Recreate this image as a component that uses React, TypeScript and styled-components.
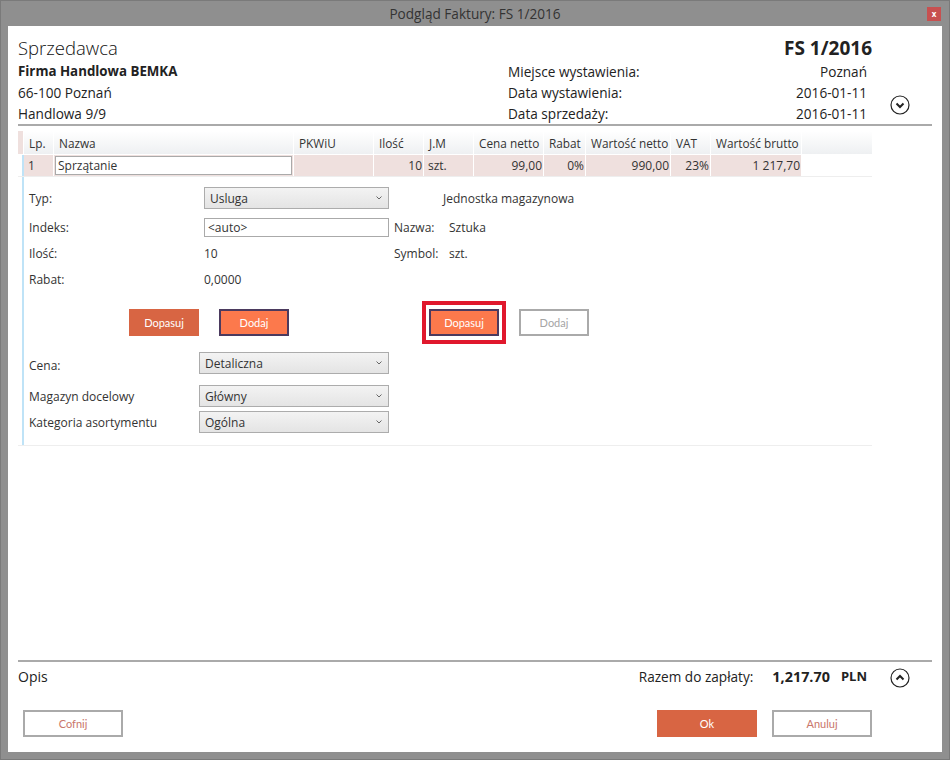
import React from 'react';
import styled, { createGlobalStyle } from 'styled-components';

const GlobalStyle = createGlobalStyle`
  html, body {
    margin: 0;
    padding: 0;
    background: #8f8f8f;
  }
  * {
    box-sizing: border-box;
  }
`;

const FONT = `"Open Sans", "Noto Sans", sans-serif`;
const BUTTON_FONT = `Lato, "Open Sans", sans-serif`;

const Window = styled.div`
  width: 950px;
  height: 760px;
  display: flex;
  flex-direction: column;
  background: #8f8f8f;
  border: 1px solid #7a7a7a;
  padding: 0 7px 7px;
  font-family: ${FONT};
  color: #222;
  overflow: hidden;
`;

const TitleBar = styled.div`
  position: relative;
  flex: none;
  height: 25px;
  display: flex;
  align-items: center;
  justify-content: center;
  font-size: 13.6px;
  color: #333;
`;

const CloseButton = styled.div`
  position: absolute;
  right: 1px;
  top: 6px;
  width: 14px;
  height: 14px;
  background: #c75050;
  color: #fff;
  font-size: 8px;
  font-weight: 700;
  line-height: 13px;
  text-align: center;
`;

const Content = styled.div`
  flex: 1;
  display: flex;
  flex-direction: column;
  background: #fff;
  padding: 0 10px;
  min-height: 0;
`;

const InvoiceHeader = styled.div`
  flex: none;
  height: 100px;
  display: flex;
  border-bottom: 2px solid #aaa;
  padding-top: 10px;
`;

const Seller = styled.div`
  width: 490px;
`;

const SectionTitle = styled.div`
  font-size: 18.5px;
  line-height: 23px;
  margin-bottom: 2px;
  font-weight: 300;
  color: #111;
`;

const InfoLine = styled.div<{ $bold?: boolean }>`
  font-size: ${p => (p.$bold ? '13.3px' : '13.6px')};
  line-height: 21px;
  font-weight: ${p => (p.$bold ? 700 : 400)};
`;

const Dates = styled.div`
  width: 364px;
`;

const InvoiceNumber = styled.div`
  font-size: 19px;
  line-height: 25px;
  font-weight: 700;
  text-align: right;
`;

const DateRow = styled.div`
  display: flex;
  justify-content: space-between;
  padding-right: 5px;
  font-size: 13.6px;
  line-height: 21px;
`;

const CollapseColumn = styled.div`
  flex: 1;
  display: flex;
  justify-content: flex-end;
  align-items: flex-end;
  padding: 0 22px 9px 0;
`;

const RoundIcon = styled.svg<{ $drop?: boolean }>`
  display: block;
  width: 20px;
  height: 20px;
  margin-top: ${p => (p.$drop ? '4px' : '0')};
`;

const TableArea = styled.div`
  flex: none;
  width: 854px;
  margin-top: 5px;
`;

const COLUMNS = '6px 30px 240px 80px 50px 50px 70px 42px 85px 40px 91px 1fr';

const HeaderRow = styled.div`
  display: grid;
  grid-template-columns: ${COLUMNS};
  height: 23px;
  background: linear-gradient(#ffffff, #eef0f2);
`;

const HeaderCell = styled.div`
  display: flex;
  align-items: center;
  padding-left: 5px;
  font-size: 11.8px;
  color: #333;
  white-space: nowrap;
  border-right: 1px solid #fff;
`;

const Marker = styled.div`
  background: #efe0de;
  border-right: 1px solid #fff;
`;

const DataRow = styled.div`
  display: grid;
  grid-template-columns: ${COLUMNS};
  height: 22px;
  margin-top: 1px;
  border-bottom: 1px solid #eee;
`;

const DataCell = styled.div<{ $right?: boolean; $plain?: boolean }>`
  display: flex;
  align-items: center;
  justify-content: ${p => (p.$right ? 'flex-end' : 'flex-start')};
  padding: 0 1px 1px 4px;
  font-size: 12px;
  color: #333;
  background: ${p => (p.$plain ? '#fff' : '#efe0de')};
  border-right: 1px solid #fff;
  white-space: nowrap;
`;

const RowMarker = styled.div`
  background: #fff;
  border-right: 2px solid #bfe3f7;
`;

const NameInput = styled.div`
  width: 238px;
  height: 19px;
  display: flex;
  align-items: center;
  margin-left: -3px;
  padding-left: 2px;
  background: #fff;
  border: 1px solid #aaa;
  font-size: 12px;
`;

const DetailPanel = styled.div`
  height: 269px;
  border-bottom: 1px solid #eee;
`;

const DetailInner = styled.div`
  height: 268px;
  margin-left: 4px;
  padding: 10px 0 0 5px;
  border-left: 2px solid #bfe3f7;
`;

const FormGrid = styled.div`
  display: grid;
  grid-template-columns: 175px 185px 60px 1fr;
  grid-template-rows: 22px 19px 14px 20px;
  row-gap: 9px;
  align-items: center;
  font-size: 12px;
  color: #333;
`;

const GridLabel = styled.div<{ $drop?: boolean }>`
  display: flex;
  align-items: center;
  height: 22px;
  padding-top: ${p => (p.$drop ? '4px' : '0')};
  white-space: nowrap;
`;

const UnitTitle = styled.div`
  grid-column: 3 / 5;
  padding-left: 54px;
  white-space: nowrap;
`;

const UnitLabel = styled.div`
  padding-left: 5px;
  white-space: nowrap;
`;

const SelectBox = styled.div`
  display: flex;
  align-items: center;
  justify-content: space-between;
  height: 22px;
  padding: 0 6px 0 5px;
  background: linear-gradient(#f3f3f3, #e4e4e4);
  border: 1px solid #acacac;
  font-size: 12px;
  color: #333;
`;

const ChevronMark = styled.svg`
  width: 6px;
  height: 4px;
  flex: none;
`;

const TextBox = styled.div`
  display: flex;
  align-items: center;
  height: 19px;
  padding-left: 3px;
  background: #fff;
  border: 1px solid #aaa;
  font-size: 12px;
`;

const ButtonRow = styled.div`
  display: flex;
  align-items: center;
  height: 43px;
  margin-top: 12px;
  padding-left: 100px;
`;

const ActionButton = styled.div<{ $variant: 'solid' | 'focus' | 'ghost'; $wide?: boolean }>`
  width: ${p => (p.$wide ? '100px' : '70px')};
  height: 27px;
  display: flex;
  align-items: center;
  justify-content: center;
  font-family: ${BUTTON_FONT};
  font-size: 11px;
  color: ${p => (p.$variant === 'ghost' ? '#c9766a' : '#fff')};
  background: ${p =>
    p.$variant === 'solid' ? '#d86543' : p.$variant === 'focus' ? '#fc794c' : '#fff'};
  border: 2px solid
    ${p =>
      p.$variant === 'solid' ? '#d86543' : p.$variant === 'focus' ? '#4b3a5e' : '#aaa'};
`;

const MutedButton = styled(ActionButton)`
  color: #a5a5a5;
`;

const AddButton = styled(ActionButton)`
  margin-left: 20px;
`;

const SecondPair = styled.div`
  display: flex;
  align-items: center;
  margin-left: 133px;
`;

const HighlightBox = styled.div`
  width: 84px;
  height: 43px;
  display: flex;
  align-items: center;
  justify-content: center;
  border: 4px solid #e0182d;
  margin-right: 13px;
`;

const LowerForm = styled.div`
  display: grid;
  grid-template-columns: 170px 190px;
  grid-template-rows: 33px 26px 22px;
  margin-top: 8px;
  width: 360px;
  align-items: start;
  font-size: 12px;
  color: #333;
`;

const Spacer = styled.div`
  flex: 1;
`;

const Footer = styled.div`
  flex: none;
  height: 92px;
  border-top: 2px solid #aaa;
`;

const SummaryRow = styled.div`
  display: flex;
  align-items: center;
  height: 28px;
  padding-right: 22px;
`;

const Opis = styled.div`
  flex: 1;
  font-size: 14px;
`;

const TotalLabel = styled.div`
  font-size: 13.6px;
  margin-right: 19px;
`;

const TotalValue = styled.div`
  font-size: 14.4px;
  font-weight: 700;
  margin-right: 11px;
`;

const Currency = styled.div`
  font-size: 13px;
  font-weight: 700;
  margin-right: 23px;
`;

const FooterButtons = styled.div`
  display: flex;
  align-items: center;
  margin-top: 20px;
  padding: 0 60px 0 5px;
`;

const FooterGap = styled.div`
  flex: 1;
`;

const CancelButton = styled(ActionButton)`
  margin-left: 15px;
`;

const Chevron = () => (
  <ChevronMark viewBox="0 0 6 4">
    <path d="M0.5 0.5 L3 3 L5.5 0.5" fill="none" stroke="#666" strokeWidth="1" />
  </ChevronMark>
);

const Select = ({ value }: { value: string }) => (
  <SelectBox>
    {value}
    <Chevron />
  </SelectBox>
);

const CircleArrow = ({ up }: { up?: boolean }) => (
  <RoundIcon viewBox="0 0 20 20" $drop={up}>
    <circle cx="10" cy="10" r="9" fill="none" stroke="#222" strokeWidth="1.2" />
    <path
      d={up ? 'M6.5 11.5 L10 8 L13.5 11.5' : 'M6.5 8.5 L10 12 L13.5 8.5'}
      fill="none"
      stroke="#222"
      strokeWidth="2"
    />
  </RoundIcon>
);

const headers = [
  'Lp.',
  'Nazwa',
  'PKWiU',
  'Ilość',
  'J.M',
  'Cena netto',
  'Rabat',
  'Wartość netto',
  'VAT',
  'Wartość brutto',
];

const App = () => {
  return (
    <>
      <GlobalStyle />
      <Window>
        <TitleBar>
          Podgląd Faktury: FS 1/2016
          <CloseButton>x</CloseButton>
        </TitleBar>
        <Content>
          <InvoiceHeader>
            <Seller>
              <SectionTitle>Sprzedawca</SectionTitle>
              <InfoLine $bold>Firma Handlowa BEMKA</InfoLine>
              <InfoLine>66-100 Poznań</InfoLine>
              <InfoLine>Handlowa 9/9</InfoLine>
            </Seller>
            <Dates>
              <InvoiceNumber>FS 1/2016</InvoiceNumber>
              <DateRow>
                <span>Miejsce wystawienia:</span>
                <span>Poznań</span>
              </DateRow>
              <DateRow>
                <span>Data wystawienia:</span>
                <span>2016-01-11</span>
              </DateRow>
              <DateRow>
                <span>Data sprzedaży:</span>
                <span>2016-01-11</span>
              </DateRow>
            </Dates>
            <CollapseColumn>
              <CircleArrow />
            </CollapseColumn>
          </InvoiceHeader>

          <TableArea>
            <HeaderRow>
              <Marker />
              {headers.map(h => (
                <HeaderCell key={h}>{h}</HeaderCell>
              ))}
              <div />
            </HeaderRow>
            <DataRow>
              <RowMarker />
              <DataCell>1</DataCell>
              <DataCell>
                <NameInput>Sprzątanie</NameInput>
              </DataCell>
              <DataCell />
              <DataCell $right>10</DataCell>
              <DataCell>szt.</DataCell>
              <DataCell $right>99,00</DataCell>
              <DataCell $right>0%</DataCell>
              <DataCell $right>990,00</DataCell>
              <DataCell $right>23%</DataCell>
              <DataCell $right>1 217,70</DataCell>
              <DataCell $plain />
            </DataRow>
            <DetailPanel>
              <DetailInner>
                <FormGrid>
                  <GridLabel>Typ:</GridLabel>
                  <Select value="Usluga" />
                  <UnitTitle>Jednostka magazynowa</UnitTitle>

                  <GridLabel>Indeks:</GridLabel>
                  <TextBox>&lt;auto&gt;</TextBox>
                  <UnitLabel>Nazwa:</UnitLabel>
                  <GridLabel>Sztuka</GridLabel>

                  <GridLabel>Ilość:</GridLabel>
                  <GridLabel>10</GridLabel>
                  <UnitLabel>Symbol:</UnitLabel>
                  <GridLabel>szt.</GridLabel>

                  <GridLabel>Rabat:</GridLabel>
                  <GridLabel>0,0000</GridLabel>
                </FormGrid>
                <ButtonRow>
                  <ActionButton $variant="solid">Dopasuj</ActionButton>
                  <AddButton $variant="focus">Dodaj</AddButton>
                  <SecondPair>
                    <HighlightBox>
                      <ActionButton $variant="focus">Dopasuj</ActionButton>
                    </HighlightBox>
                    <MutedButton $variant="ghost">Dodaj</MutedButton>
                  </SecondPair>
                </ButtonRow>
                <LowerForm>
                  <GridLabel $drop>Cena:</GridLabel>
                  <Select value="Detaliczna" />
                  <GridLabel>Magazyn docelowy</GridLabel>
                  <Select value="Główny" />
                  <GridLabel>Kategoria asortymentu</GridLabel>
                  <Select value="Ogólna" />
                </LowerForm>
              </DetailInner>
            </DetailPanel>
          </TableArea>

          <Spacer />

          <Footer>
            <SummaryRow>
              <Opis>Opis</Opis>
              <TotalLabel>Razem do zapłaty:</TotalLabel>
              <TotalValue>1,217.70</TotalValue>
              <Currency>PLN</Currency>
              <CircleArrow up />
            </SummaryRow>
            <FooterButtons>
              <ActionButton $variant="ghost" $wide>Cofnij</ActionButton>
              <FooterGap />
              <ActionButton $variant="solid" $wide>Ok</ActionButton>
              <CancelButton $variant="ghost" $wide>Anuluj</CancelButton>
            </FooterButtons>
          </Footer>
        </Content>
      </Window>
    </>
  );
};

export default App;
